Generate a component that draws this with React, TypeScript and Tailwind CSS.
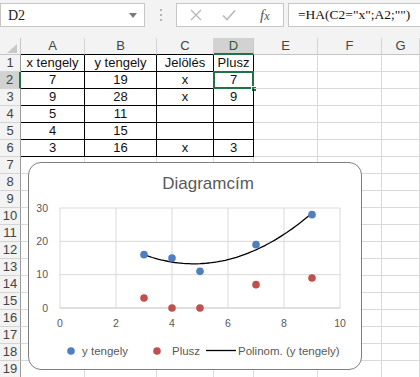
import React from "react";

const cols = [
  { key: "A", w: "w-[64px]" },
  { key: "B", w: "w-[72px]" },
  { key: "C", w: "w-[57px]" },
  { key: "D", w: "w-[40px]" },
  { key: "E", w: "w-[64px]" },
  { key: "F", w: "w-[64px]" },
  { key: "G", w: "flex-1" },
];

const data: string[][] = [
  ["x tengely", "y tengely", "Jelölés", "Plusz"],
  ["7", "19", "x", "7"],
  ["9", "28", "x", "9"],
  ["5", "11", "", ""],
  ["4", "15", "", ""],
  ["3", "16", "x", "3"],
];

const blue = [
  [7, 19],
  [9, 28],
  [5, 11],
  [4, 15],
  [3, 16],
];
const red = [
  [7, 7],
  [9, 9],
  [5, 0],
  [4, 0],
  [3, 3],
];

// chart coords are page pixels
const px = (x: number) => 60 + 28 * x;
const py = (y: number) => 308 - (100 / 30) * y;

// 2nd order fit of the y tengely series
const trend = (x: number) => 32.868 - 8.194 * x + 0.85608 * x * x;

function trendPoints() {
  const pts: string[] = [];
  for (let i = 0; i <= 60; i++) {
    const x = 3 + i * 0.1;
    pts.push(`${px(x).toFixed(1)},${py(trend(x)).toFixed(1)}`);
  }
  return pts.join(" ");
}

function Toolbar() {
  return (
    <div className="flex h-[38px] items-start bg-[#f3f3f3] pt-[3px]">
      {/* name box */}
      <div className="relative flex h-[24px] w-[145px] items-center border border-[#c6c6c6] bg-white pl-[7px] font-['Liberation_Serif',serif] text-[14px] text-[#222]">
        D2
        <svg className="absolute right-[7px] top-[9px]" width="8" height="5" viewBox="0 0 8 5">
          <polygon points="0,0 8,0 4,5" fill="#7a7a7a" />
        </svg>
      </div>
      {/* grip */}
      <div className="flex h-[24px] w-[31px] flex-col items-center justify-center gap-[3px]">
        <span className="h-[2px] w-[2px] bg-[#b5b5b5]" />
        <span className="h-[2px] w-[2px] bg-[#b5b5b5]" />
        <span className="h-[2px] w-[2px] bg-[#b5b5b5]" />
      </div>
      {/* cancel / enter / fx */}
      <div className="flex h-[24px] w-[108px] items-center border border-[#c6c6c6] bg-white">
        <svg className="ml-[13px]" width="12" height="12" viewBox="0 0 12 12">
          <path d="M1 1 L11 11 M11 1 L1 11" stroke="#b9b9b9" strokeWidth="1.4" />
        </svg>
        <svg className="ml-[20px]" width="14" height="12" viewBox="0 0 14 12">
          <path d="M1 6.5 L5 10.5 L13 1.5" stroke="#b9b9b9" strokeWidth="1.6" fill="none" />
        </svg>
        <span className="ml-[24px] font-['Liberation_Serif',serif] text-[15px] italic text-[#555]">
          f<span className="text-[12px]">x</span>
        </span>
      </div>
      <div className="ml-[4px] flex h-[24px] flex-1 items-center border border-[#c6c6c6] border-r-0 bg-white pl-[9px] font-['Liberation_Serif',serif] text-[13.5px] text-[#111]">
        =HA(C2="x";A2;"")
      </div>
    </div>
  );
}

function HeaderRow() {
  return (
    <div className="flex h-[17px] bg-[#f3f3f3] text-[13px] text-[#444]">
      <div className="relative w-[21px] border-r border-b border-[#c6c6c6]">
        <svg className="absolute left-[7px] top-[6px]" width="10" height="9" viewBox="0 0 10 9">
          <polygon points="10,0 10,9 0,9" fill="#c8c8c8" />
        </svg>
      </div>
      {cols.map((c, i) => {
        const sel = c.key === "D";
        return (
          <div
            key={c.key}
            className={`${c.w} flex items-center justify-center border-r ${
              sel
                ? "border-b-2 border-r-[#c6c6c6] border-b-[#217346] bg-[#d2d2d2] text-[#2b5a3c]"
                : i < 4
                ? "border-b border-r-[#d4d4d4] border-b-black"
                : "border-b border-r-[#d4d4d4] border-b-[#c6c6c6]"
            }`}
          >
            {c.key}
          </div>
        );
      })}
    </div>
  );
}

function Row({ n }: { n: number }) {
  const rowData = data[n - 1];
  const selRow = n === 2;
  return (
    <div className="flex h-[17px] text-[13px] text-[#111]">
      <div
        className={`flex w-[21px] items-center justify-center border-b border-b-[#d4d4d4] text-[#444] ${
          selRow ? "border-r-2 border-r-[#217346] bg-[#d2d2d2]" : "border-r border-r-[#9a9a9a] bg-[#f3f3f3]"
        }`}
      >
        {n}
      </div>
      {cols.map((c, i) => {
        const inTable = rowData && i < 4;
        const text = inTable ? rowData[i] : "";
        const sel = n === 2 && c.key === "D";
        return (
          <div
            key={c.key}
            className={`${c.w} relative flex items-center justify-center border-r border-b ${
              inTable ? "border-black" : "border-[#d9d9d9]"
            }`}
          >
            {text}
            {sel && (
              <>
                <div className="absolute -left-[1px] -top-[1px] right-[-1px] bottom-[-1px] border-2 border-[#217346]" />
                <div className="absolute -bottom-[4px] -right-[4px] h-[6px] w-[6px] border border-white bg-[#217346]" />
              </>
            )}
          </div>
        );
      })}
    </div>
  );
}

function Chart() {
  const xt = [0, 2, 4, 6, 8, 10];
  const yt = [0, 10, 20, 30];
  return (
    <>
      <div className="absolute left-[28px] top-[162px] h-[208px] w-[334px] rounded-[13px] border-[1.5px] border-[#7f7f7f] bg-white" />
      <svg
        className="absolute left-[28px] top-[162px]"
        width="334"
        height="208"
        viewBox="28 162 334 208"
        fontFamily="'Liberation Sans', Arial, sans-serif"
      >
        <text x="208" y="189" textAnchor="middle" fontSize="17" fill="#595959">
          Diagramcím
        </text>
        {yt.map((v) => (
          <g key={v}>
            <line x1={60} x2={340} y1={py(v)} y2={py(v)} stroke={v === 0 ? "#bfbfbf" : "#d9d9d9"} strokeWidth="1" />
            <text x="48" y={py(v) + 3.5} textAnchor="end" fontSize="10.5" fill="#595959">
              {v}
            </text>
          </g>
        ))}
        {xt.map((v) => (
          <g key={v}>
            <line x1={px(v)} x2={px(v)} y1={py(30)} y2={py(0)} stroke="#d9d9d9" strokeWidth="1" />
            <text x={px(v)} y="327" textAnchor="middle" fontSize="10.5" fill="#595959">
              {v}
            </text>
          </g>
        ))}
        <polyline points={trendPoints()} fill="none" stroke="#000" strokeWidth="1.3" />
        {blue.map(([x, y]) => (
          <circle key={`b${x}`} cx={px(x)} cy={py(y)} r="3.8" fill="#4f7fc0" />
        ))}
        {red.map(([x, y]) => (
          <circle key={`r${x}`} cx={px(x)} cy={py(y)} r="3.8" fill="#c0504d" />
        ))}
        {/* legend */}
        <circle cx="71" cy="351" r="3.8" fill="#4f7fc0" />
        <text x="82" y="355" fontSize="11.5" fill="#595959">
          y tengely
        </text>
        <circle cx="157" cy="351" r="3.8" fill="#c0504d" />
        <text x="172" y="355" fontSize="11.5" fill="#595959">
          Plusz
        </text>
        <line x1="206" x2="236" y1="350.5" y2="350.5" stroke="#000" strokeWidth="1.3" />
        <text x="238" y="355" fontSize="11.5" fill="#595959">
          Polinom. (y tengely)
        </text>
      </svg>
    </>
  );
}

export default function App() {
  const rows = Array.from({ length: 19 }, (_, i) => i + 1);
  return (
    <div className="relative h-[377px] w-[420px] overflow-hidden bg-white font-['Liberation_Sans',Arial,sans-serif]">
      <Toolbar />
      <HeaderRow />
      {rows.map((n) => (
        <Row key={n} n={n} />
      ))}
      <Chart />
    </div>
  );
}
